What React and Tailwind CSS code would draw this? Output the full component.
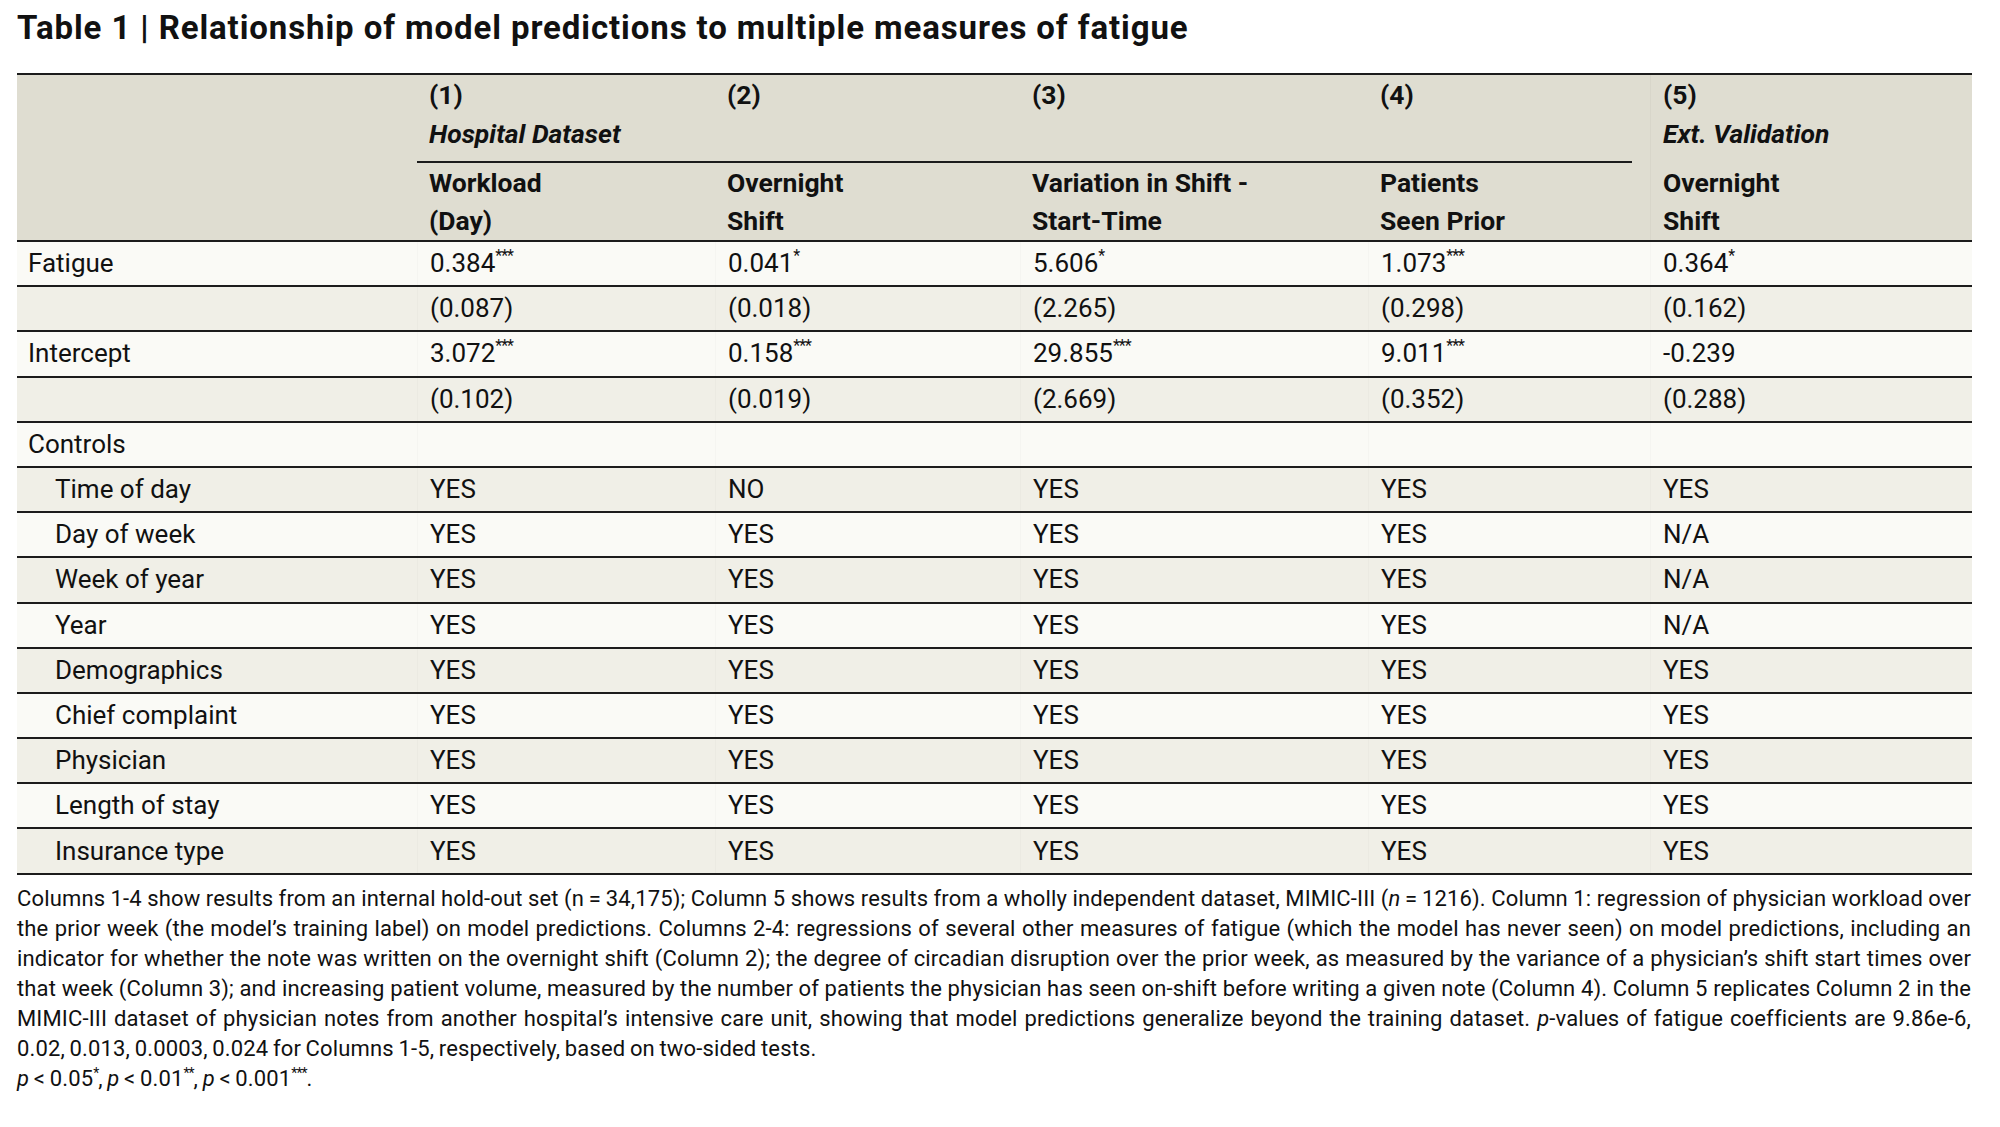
import React from 'react';

const COLS = 'grid grid-cols-[400px_298px_305px_348px_282px_322px]';

const ROWS = [
  { label: 'Fatigue', vals: [['0.384', '***'], ['0.041', '*'], ['5.606', '*'], ['1.073', '***'], ['0.364', '*']] },
  { label: '', vals: ['(0.087)', '(0.018)', '(2.265)', '(0.298)', '(0.162)'] },
  { label: 'Intercept', vals: [['3.072', '***'], ['0.158', '***'], ['29.855', '***'], ['9.011', '***'], ['-0.239', '']] },
  { label: '', vals: ['(0.102)', '(0.019)', '(2.669)', '(0.352)', '(0.288)'] },
  { label: 'Controls', vals: ['', '', '', '', ''] },
  { label: 'Time of day', indent: true, vals: ['YES', 'NO', 'YES', 'YES', 'YES'] },
  { label: 'Day of week', indent: true, vals: ['YES', 'YES', 'YES', 'YES', 'N/A'] },
  { label: 'Week of year', indent: true, vals: ['YES', 'YES', 'YES', 'YES', 'N/A'] },
  { label: 'Year', indent: true, vals: ['YES', 'YES', 'YES', 'YES', 'N/A'] },
  { label: 'Demographics', indent: true, vals: ['YES', 'YES', 'YES', 'YES', 'YES'] },
  { label: 'Chief complaint', indent: true, vals: ['YES', 'YES', 'YES', 'YES', 'YES'] },
  { label: 'Physician', indent: true, vals: ['YES', 'YES', 'YES', 'YES', 'YES'] },
  { label: 'Length of stay', indent: true, vals: ['YES', 'YES', 'YES', 'YES', 'YES'] },
  { label: 'Insurance type', indent: true, vals: ['YES', 'YES', 'YES', 'YES', 'YES'] },
];

const HEAD_TOP = ['(1)', '(2)', '(3)', '(4)'];
const HEAD_SUB = [
  ['Workload', '(Day)'],
  ['Overnight', 'Shift'],
  ['Variation in Shift -', 'Start-Time'],
  ['Patients', 'Seen Prior'],
];

// significance stars, sit at cap height right after the number
function Star({ s, small }) {
  return (
    <span
      className={`relative leading-none tracking-[-1px] ${small ? 'text-[14px] top-[-8px]' : 'text-[16px] top-[-11px]'}`}
    >
      {s}
    </span>
  );
}

function Value({ v }) {
  if (Array.isArray(v)) {
    return (
      <span>
        {v[0]}
        {v[1] && <Star s={v[1]} />}
      </span>
    );
  }
  return <span>{v}</span>;
}

function Line({ children, last }) {
  return (
    <div className={`whitespace-nowrap ${last ? '' : 'text-justify [text-align-last:justify]'}`}>
      {children}
    </div>
  );
}

export default function App() {
  return (
    <div className="min-h-screen bg-white text-[#111] font-['Roboto','Liberation_Sans',sans-serif] px-[17px] pt-[8px]">
      {/* Title */}
      <h1 className="text-[33px] font-bold leading-[40px] tracking-[0.9px]">
        Table 1 | Relationship of model predictions to multiple measures of fatigue
      </h1>

      {/* Table */}
      <div className="mt-[25px] w-[1955px] border-t-2 border-[#1c1c1c]">
        {/* header */}
        <div className={`${COLS} bg-[#dfddd1] border-b-2 border-[#1c1c1c] text-[26.5px] font-bold`}>
          <div className="row-span-2" />
          <div className="col-span-4 grid grid-cols-[298px_305px_348px_264px] border-b-2 border-[#1c1c1c] mr-[18px] pb-[8px]">
            {HEAD_TOP.map((h, i) => (
              <div key={h} className="pl-[12px] leading-[39px]">
                <div>{h}</div>
                <div className="italic">{i === 0 ? 'Hospital Dataset' : '\u00a0'}</div>
              </div>
            ))}
          </div>
          <div className="row-span-2 pl-[12px] leading-[39px] border-l border-black/[0.03]">
            <div>(5)</div>
            <div className="italic">Ext. Validation</div>
            <div className="leading-[38px] mt-[11px]">Overnight</div>
            <div className="leading-[38px]">Shift</div>
          </div>
          {HEAD_SUB.map((h) => (
            <div key={h[0]} className="pl-[12px] pt-[1px] leading-[38px]">
              <div>{h[0]}</div>
              <div>{h[1]}</div>
            </div>
          ))}
        </div>

        {/* body */}
        {ROWS.map((r, i) => (
          <div
            key={i}
            className={`${COLS} h-[45.2px] border-b-2 border-[#1c1c1c] text-[26px] ${
              i % 2 === 0 ? 'bg-[#fafaf6]' : 'bg-[#f0efe7]'
            }`}
          >
            <div className={`flex items-center ${r.indent ? 'pl-[38px]' : 'pl-[11px]'}`}>{r.label}</div>
            {r.vals.map((v, j) => (
              <div key={j} className="flex items-center pl-[12px] border-l border-black/[0.02]">
                <Value v={v} />
              </div>
            ))}
          </div>
        ))}
      </div>

      {/* Footnote */}
      <div className="mt-[9px] w-[1954px] text-[22px] leading-[30px] tracking-[0.15px] [word-spacing:-1px]">
        <Line>
          Columns 1-4 show results from an internal hold-out set (n{'\u2009'}={'\u2009'}34,175); Column 5 shows results
          from a wholly independent dataset, MIMIC-III (<i>n</i>{'\u2009'}={'\u2009'}1216). Column 1: regression of
          physician workload over
        </Line>
        <Line>
          the prior week (the model’s training label) on model predictions. Columns 2-4: regressions of several other
          measures of fatigue (which the model has never seen) on model predictions, including an
        </Line>
        <Line>
          indicator for whether the note was written on the overnight shift (Column 2); the degree of circadian
          disruption over the prior week, as measured by the variance of a physician’s shift start times over
        </Line>
        <Line>
          that week (Column 3); and increasing patient volume, measured by the number of patients the physician has
          seen on-shift before writing a given note (Column 4). Column 5 replicates Column 2 in the
        </Line>
        <Line>
          MIMIC-III dataset of physician notes from another hospital’s intensive care unit, showing that model
          predictions generalize beyond the training dataset. <i>p</i>-values of fatigue coefficients are 9.86e-6,
        </Line>
        <Line last>0.02, 0.013, 0.0003, 0.024 for Columns 1-5, respectively, based on two-sided tests.</Line>
        <Line last>
          <i>p</i> &lt; 0.05<Star small s="*" />, <i>p</i> &lt; 0.01<Star small s="**" />, <i>p</i> &lt; 0.001
          <Star small s="***" />.
        </Line>
      </div>
    </div>
  );
}
